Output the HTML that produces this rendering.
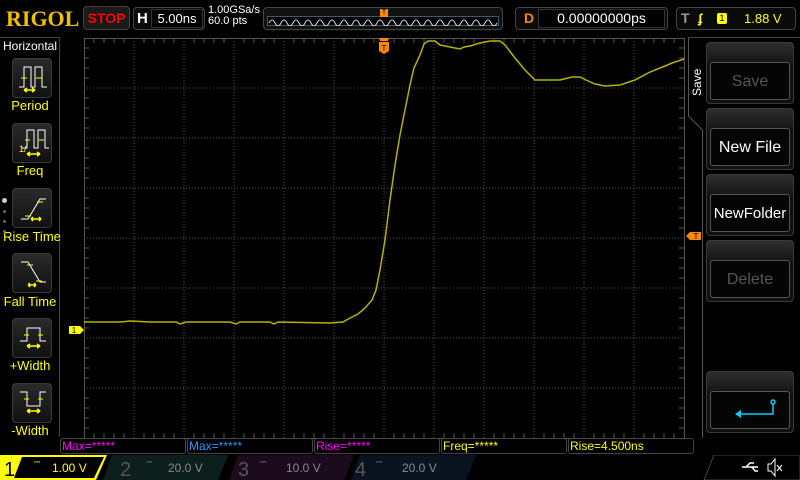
<!DOCTYPE html>
<html><head><meta charset="utf-8"><style>
*{margin:0;padding:0;box-sizing:border-box}
body{width:800px;height:480px;background:#000;overflow:hidden;position:relative;font-family:"Liberation Sans",sans-serif}
.abs{position:absolute}
.box{position:absolute;border:1px solid #444;border-radius:4px;background:#0a0a0a}
.lbtn{position:absolute;left:12px;width:40px;height:40px;border:1px solid #3a3a3a;border-radius:4px;background:linear-gradient(#2a2a2a,#111)}
.llab{position:absolute;left:0;width:60px;text-align:center;color:#ff0;font-size:13px}
.rbtn{position:absolute;left:706px;width:88px;height:62px;border:1px solid #3a3a3a;border-radius:4px;background:linear-gradient(#2e2e2e,#111 40%)}
.rin{position:absolute;left:3px;right:3px;top:19px;bottom:3px;border:1px solid #555;border-radius:3px;background:#050505;color:#fff;font-size:16px;text-align:center;line-height:38px}
.meas{position:absolute;top:438px;height:16px;width:126px;border:1px solid #444;border-radius:3px;font-size:12px;line-height:14px;padding-left:1px}
</style></head><body>
<!-- top bar -->
<div class="abs" style="left:6px;top:6px;color:#f0c000;font:bold 22px 'Liberation Serif',serif;letter-spacing:0px">RIGOL</div>
<div class="box" style="left:83px;top:6px;width:47px;height:24px;background:#1a1a1a;color:#f00;font-weight:bold;font-size:14px;text-align:center;line-height:22px">STOP</div>
<div class="box" style="left:133px;top:7px;width:72px;height:23px;color:#fff;font-size:13px;line-height:21px"><b style="padding-left:3px;font-size:15px">H</b><span style="position:absolute;left:17px;top:1px;width:52px;height:19px;border:1px solid #333;background:#000;text-align:center;line-height:17px">5.00ns</span></div>
<div class="abs" style="left:208px;top:5px;color:#fff;font-size:11px;line-height:11px">1.00GSa/s<br>60.0 pts</div>
<div class="box" style="left:263px;top:7px;width:240px;height:23px;background:#111">
<svg class="abs" style="left:3px;top:8px" width="232" height="10"><rect x="0.5" y="0.5" width="231" height="9" fill="#000" stroke="#3b5a6a"/><path d="M2 7 q3 -6 6 0 t6 0 t6 0 t6 0 t6 0 t6 0 t6 0 t6 0 t6 0 t6 0 t6 0 t6 0 t6 0 t6 0 t6 0 t6 0 t6 0 t6 0 t6 0 t6 0 t6 0 t6 0 t6 0 t6 0 t6 0 t6 0 t6 0 t6 0 t6 0 t6 0 t6 0 t6 0 t6 0 t6 0 t6 0 t6 0 t6 0 t6 0" stroke="#ddd" fill="none"/></svg>
<div class="abs" style="left:116px;top:1px;width:8px;height:8px;background:#f80;color:#000;font-size:7px;text-align:center;line-height:8px">T</div></div>
<div class="box" style="left:515px;top:7px;width:153px;height:23px;color:#fff;font-size:14px;line-height:21px"><b style="color:#f80;padding-left:8px">D</b><span style="position:absolute;left:22px;top:1px;width:127px;height:19px;border:1px solid #333;background:#000;text-align:center;line-height:17px">0.00000000ps</span></div>
<div class="box" style="left:676px;top:7px;width:120px;height:23px;font-size:13px;line-height:21px"><b style="color:#999;padding-left:4px;font-size:14px">T</b><span style="position:absolute;left:21px;top:0;color:#ff0;font-weight:bold">ʄ</span><span style="position:absolute;left:40px;top:5px;width:10px;height:11px;background:#ff0;border-radius:2px;color:#000;font-size:9px;text-align:center;line-height:11px">1</span><span style="position:absolute;left:67px;color:#ff0">1.88 V</span></div>
<!-- left panel -->
<div class="abs" style="left:0;top:37px;width:60px;height:400px;border-right:1px solid #444;border-top:1px solid #444"></div>
<div class="abs" style="left:3px;top:39px;color:#fff;font-size:12px">Horizontal</div>
<div class="lbtn" style="top:58px"><svg width="40" height="40"><path d="M6 28h5V8h7v20h4V8h7v20h5" stroke="#fff" fill="none"/><path d="M8 19h6M23 19h6" stroke="#ff0"/><path d="M11 31h11M11 31l3-2M11 31l3 2M22 31l-3-2M22 31l-3 2" stroke="#ff0" stroke-width="1.5"/></svg></div>
<div class="llab" style="top:98px">Period</div>
<div class="lbtn" style="top:123px"><svg width="40" height="40"><path d="M9 24h5V6h7v18h4V6h7v18h4" stroke="#fff" fill="none"/><path d="M12 16h5M26 16h5" stroke="#ff0"/><path d="M14 30h13M14 30l3-2M14 30l3 2M27 30l-3-2M27 30l-3 2" stroke="#ff0" stroke-width="1.5"/><text x="6" y="28" fill="#ff0" font-size="9">1/</text></svg></div>
<div class="llab" style="top:163px">Freq</div>
<div class="lbtn" style="top:188px"><svg width="40" height="40"><path d="M8 30h7l12-20h6" stroke="#fff" fill="none"/><path d="M24 13h6M12 27h6" stroke="#ff0"/><path d="M18 30h10M18 30l2-2M18 30l2 2M28 30l-2-2M28 30l-2 2" stroke="#ff0" stroke-width="1.5"/></svg></div>
<div class="llab" style="top:229px;left:2px">Rise Time</div>
<div class="abs" style="left:2px;top:198px;width:5px;height:5px;border-radius:50%;background:#ccc"></div>
<div class="abs" style="left:3px;top:210px;width:3px;height:3px;border-radius:50%;background:#666"></div>
<div class="abs" style="left:3px;top:220px;width:3px;height:3px;border-radius:50%;background:#666"></div>
<div class="abs" style="left:3px;top:230px;width:3px;height:3px;border-radius:50%;background:#666"></div>
<div class="lbtn" style="top:253px"><svg width="40" height="40"><path d="M8 8h7l12 20h6" stroke="#fff" fill="none"/><path d="M14 11h6M23 27h6" stroke="#ff0"/><path d="M15 31h8M15 31l2-2M15 31l2 2M23 31l-2-2M23 31l-2 2" stroke="#ff0" stroke-width="1.5"/></svg></div>
<div class="llab" style="top:294px">Fall Time</div>
<div class="lbtn" style="top:318px"><svg width="40" height="40"><path d="M7 22h7V9h13v13h6" stroke="#fff" fill="none"/><path d="M11 16h5M25 16h5" stroke="#ff0"/><path d="M14 27h13M14 27l3-2M14 27l3 2M27 27l-3-2M27 27l-3 2" stroke="#ff0" stroke-width="1.5"/></svg></div>
<div class="llab" style="top:358px">+Width</div>
<div class="lbtn" style="top:383px"><svg width="40" height="40"><path d="M7 8h7v14h13V8h6" stroke="#fff" fill="none"/><path d="M11 15h5M25 15h5" stroke="#ff0"/><path d="M14 27h13M14 27l3-2M14 27l3 2M27 27l-3-2M27 27l-3 2" stroke="#ff0" stroke-width="1.5"/></svg></div>
<div class="llab" style="top:423px">-Width</div>
<!-- grid & waveform -->
<svg class="abs" style="left:0;top:0" width="800" height="480">
<g stroke="#555" stroke-dasharray="1 2">
<path d="M134 38V438M184 38V438M234 38V438M284 38V438M334 38V438M384 38V438M434 38V438M484 38V438M534 38V438M584 38V438M634 38V438"/>
<path d="M84 88H684M84 138H684M84 188H684M84 238H684M84 288H684M84 338H684M84 388H684"/>
</g>
<rect x="84.5" y="38.5" width="600" height="400" fill="none" stroke="#555"/>
<g stroke="#555">
<path d="M94 38v5M104 38v5M114 38v5M124 38v5M144 38v5M154 38v5M164 38v5M174 38v5M194 38v5M204 38v5M214 38v5M224 38v5M244 38v5M254 38v5M264 38v5M274 38v5M294 38v5M304 38v5M314 38v5M324 38v5M344 38v5M354 38v5M364 38v5M374 38v5M394 38v5M404 38v5M414 38v5M424 38v5M444 38v5M454 38v5M464 38v5M474 38v5M494 38v5M504 38v5M514 38v5M524 38v5M544 38v5M554 38v5M564 38v5M574 38v5M594 38v5M604 38v5M614 38v5M624 38v5M644 38v5M654 38v5M664 38v5M674 38v5"/>
<path d="M94 438v-5M104 438v-5M114 438v-5M124 438v-5M144 438v-5M154 438v-5M164 438v-5M174 438v-5M194 438v-5M204 438v-5M214 438v-5M224 438v-5M244 438v-5M254 438v-5M264 438v-5M274 438v-5M294 438v-5M304 438v-5M314 438v-5M324 438v-5M344 438v-5M354 438v-5M364 438v-5M374 438v-5M394 438v-5M404 438v-5M414 438v-5M424 438v-5M444 438v-5M454 438v-5M464 438v-5M474 438v-5M494 438v-5M504 438v-5M514 438v-5M524 438v-5M544 438v-5M554 438v-5M564 438v-5M574 438v-5M594 438v-5M604 438v-5M614 438v-5M624 438v-5M644 438v-5M654 438v-5M664 438v-5M674 438v-5"/>
<path d="M84 48h5M84 58h5M84 68h5M84 78h5M84 98h5M84 108h5M84 118h5M84 128h5M84 148h5M84 158h5M84 168h5M84 178h5M84 198h5M84 208h5M84 218h5M84 228h5M84 248h5M84 258h5M84 268h5M84 278h5M84 298h5M84 308h5M84 318h5M84 328h5M84 348h5M84 358h5M84 368h5M84 378h5M84 398h5M84 408h5M84 418h5M84 428h5"/>
<path d="M684 48h-5M684 58h-5M684 68h-5M684 78h-5M684 98h-5M684 108h-5M684 118h-5M684 128h-5M684 148h-5M684 158h-5M684 168h-5M684 178h-5M684 198h-5M684 208h-5M684 218h-5M684 228h-5M684 248h-5M684 258h-5M684 268h-5M684 278h-5M684 298h-5M684 308h-5M684 318h-5M684 328h-5M684 348h-5M684 358h-5M684 368h-5M684 378h-5M684 398h-5M684 408h-5M684 418h-5M684 428h-5"/>
</g>
<path d="M84 322L120 322L130 321L150 322L176 322L180 324L186 322L230 322L236 324L240 322L270 322L274 324L278 322L330 323L343 322L350 318L358 314L365 308L372 300L376 290L380 270L385 240L390 200L395 165L400 135L405 110L410 85L414 68L420 55L424 44L428 41L435 41L440 45L450 47L460 49L464 47L470 46L480 43L490 41L500 41L505 45L515 58L525 70L535 80L545 80L560 80L572 77L580 77L586 80L595 84L605 86L620 85L635 80L650 72L665 66L672 63L684 59" stroke="#b3b300" stroke-width="1.5" fill="none"/>
<path d="M379 38h10l-1 3h-8z M379 42h10v9l-5 3l-5-3z" fill="#f80"/>
<text x="384" y="51" font-size="8" text-anchor="middle" fill="#000" font-family="Liberation Sans">T</text>
<path d="M69 326h11l4 4l-4 4h-11z" fill="#ff0"/><text x="74" y="333" font-size="8" fill="#000" font-family="Liberation Sans" text-anchor="middle">1</text>
<path d="M701 232h-11l-4 4l4 4h11z" fill="#f80"/><text x="696" y="239" font-size="8" fill="#000" font-family="Liberation Sans" text-anchor="middle">T</text>
<!-- right panel border -->
<path d="M688.5 37V116L702.5 130V438" stroke="#555" fill="none"/>
<path d="M688 37.5H800" stroke="#444"/>
</svg>
<div class="abs" style="color:#fff;font-size:12px;transform:rotate(-90deg);transform-origin:left top;width:40px;top:96px;left:690px">Save</div>
<div class="rbtn" style="top:42px"><div class="rin" style="color:#555">Save</div></div>
<div class="rbtn" style="top:108px"><div class="rin">New File</div></div>
<div class="rbtn" style="top:174px"><div class="rin" style="font-size:15px">NewFolder</div></div>
<div class="rbtn" style="top:240px"><div class="rin" style="color:#555">Delete</div></div>
<div class="rbtn" style="top:371px"><div class="rin"><svg width="80" height="38"><path d="M62 12v10H29" stroke="#1cf" stroke-width="1.5" fill="none"/><circle cx="62" cy="10" r="2" stroke="#1cf" fill="none" stroke-width="1.5"/><path d="M24 22l6-4v8z" fill="#1cf"/></svg></div></div>
<!-- measurements -->
<div class="meas" style="left:60px;color:#f0f">Max=*****</div>
<div class="meas" style="left:187px;color:#29f">Max=*****</div>
<div class="meas" style="left:314px;color:#f0f">Rise=*****</div>
<div class="meas" style="left:441px;color:#ff0">Freq=*****</div>
<div class="meas" style="left:568px;color:#ff0">Rise=4.500ns</div>
<!-- channel bar -->
<svg class="abs" style="left:0;top:455px" width="800" height="25">
<path d="M0 0H107L96 25H0z" fill="#ff0"/><path d="M22 2H104L94 23H14z" fill="#000"/>
<path d="M112 0H228L218 25H103z" fill="#0d1f1c"/><path d="M238 0H354L344 25H229z" fill="#1c0b1c"/><path d="M360 0H476L466 25H351z" fill="#0a1420"/>
<path d="M714 0H800V25H704z" fill="none" stroke="#444"/>
<g font-family="Liberation Sans" font-size="12">
<text x="4" y="21" fill="#000" font-size="20">1</text><text x="34" y="9" fill="#ff0" font-size="8">⎓</text><text x="52" y="17" fill="#ff0">1.00 V</text>
<text x="120" y="21" fill="#555" font-size="20">2</text><text x="146" y="9" fill="#777" font-size="8">⎓</text><text x="168" y="17" fill="#888">20.0 V</text>
<text x="238" y="21" fill="#555" font-size="20">3</text><text x="260" y="9" fill="#777" font-size="8">⎓</text><text x="286" y="17" fill="#888">10.0 V</text>
<text x="355" y="21" fill="#555" font-size="20">4</text><text x="376" y="9" fill="#777" font-size="8">⎓</text><text x="402" y="17" fill="#888">20.0 V</text>
</g>
<path d="M742 12h16M746 12l4-4h4M752 12l3 4h3" stroke="#fff" fill="none" stroke-width="1.5"/>
<path d="M768 9h3l4-5v17l-4-5h-3z" fill="none" stroke="#fff"/><path d="M777 10l5 6M782 10l-5 6" stroke="#fff"/>
</svg>
</body></html>
